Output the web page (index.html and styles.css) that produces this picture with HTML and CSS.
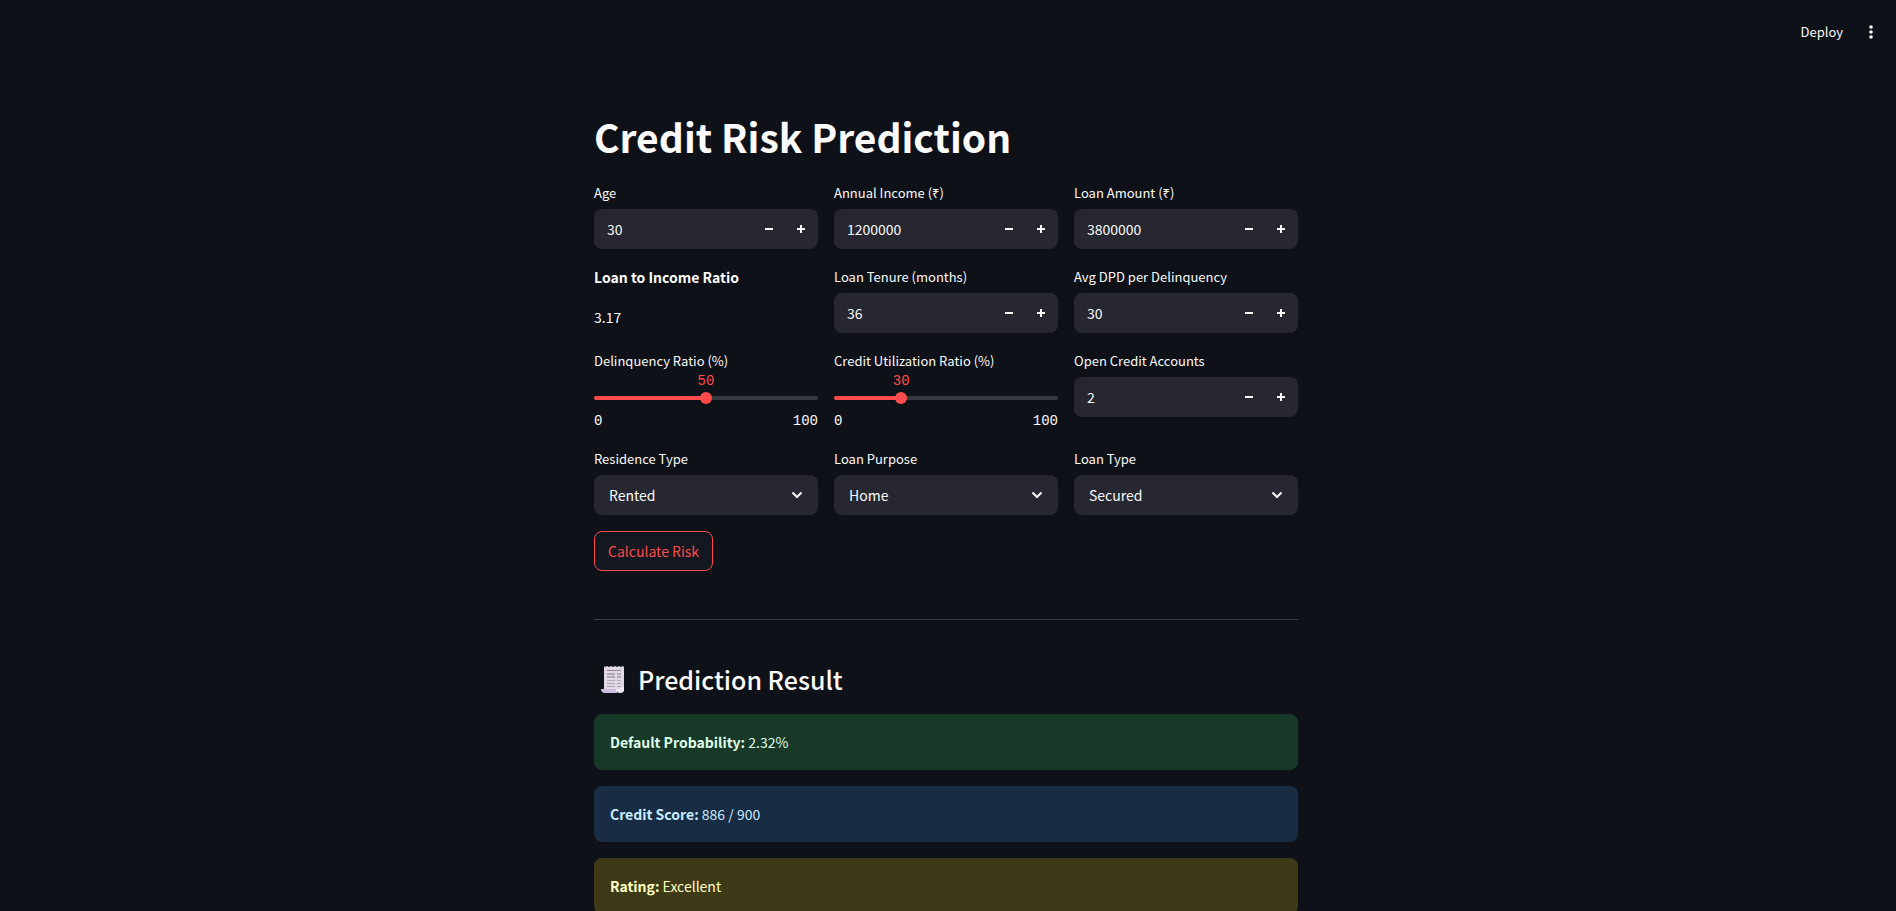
FILE: index.html
```html
<!DOCTYPE html>
<html lang="en">
<head>
<meta charset="utf-8">
<title>Credit Risk Prediction</title>
<link rel="stylesheet" href="styles.css">
</head>
<body>
<svg class="sprite" aria-hidden="true">
  <symbol id="minus" viewBox="0 0 8 8"><path d="M0 3h8v2H0z"/></symbol>
  <symbol id="plus" viewBox="0 0 8 8"><path d="M3 0h2v3h3v2H5v3H3V5H0V3h3z"/></symbol>
  <symbol id="chevron" viewBox="0 0 12 8"><path d="M1.500 1.500L6 6l4.500-4.500" fill="none" stroke="currentColor" stroke-width="2"/></symbol>
</svg>
<header class="toolbar">
  <button class="deploy" type="button">Deploy</button>
  <button class="menu" type="button" aria-label="Main menu"><svg viewBox="0 0 4 14"><circle cx="2" cy="2" r="1.800"/><circle cx="2" cy="7" r="1.800"/><circle cx="2" cy="12" r="1.800"/></svg></button>
</header>
<main class="page">
  <h1 class="title">Credit Risk Prediction</h1>
  <form class="form">
    <div class="row">
      <div class="field">
        <label class="label" for="age">Age</label>
        <div class="number"><input id="age" type="number" value="30"><button type="button" aria-label="Decrease"><svg><use href="#minus"/></svg></button><button type="button" aria-label="Increase"><svg><use href="#plus"/></svg></button></div>
      </div>
      <div class="field">
        <label class="label" for="income">Annual Income (₹)</label>
        <div class="number"><input id="income" type="number" value="1200000"><button type="button" aria-label="Decrease"><svg><use href="#minus"/></svg></button><button type="button" aria-label="Increase"><svg><use href="#plus"/></svg></button></div>
      </div>
      <div class="field">
        <label class="label" for="amount">Loan Amount (₹)</label>
        <div class="number"><input id="amount" type="number" value="3800000"><button type="button" aria-label="Decrease"><svg><use href="#minus"/></svg></button><button type="button" aria-label="Increase"><svg><use href="#plus"/></svg></button></div>
      </div>
    </div>
    <div class="row">
      <div class="ratio">
        <strong>Loan to Income Ratio</strong>
        <span>3.17</span>
      </div>
      <div class="field">
        <label class="label" for="tenure">Loan Tenure (months)</label>
        <div class="number"><input id="tenure" type="number" value="36"><button type="button" aria-label="Decrease"><svg><use href="#minus"/></svg></button><button type="button" aria-label="Increase"><svg><use href="#plus"/></svg></button></div>
      </div>
      <div class="field">
        <label class="label" for="dpd">Avg DPD per Delinquency</label>
        <div class="number"><input id="dpd" type="number" value="30"><button type="button" aria-label="Decrease"><svg><use href="#minus"/></svg></button><button type="button" aria-label="Increase"><svg><use href="#plus"/></svg></button></div>
      </div>
    </div>
    <div class="row">
      <div class="field" style="--value: 50%">
        <label class="label" for="delinquency">Delinquency Ratio (%)</label>
        <div class="slider"><span class="rail"></span><input id="delinquency" type="range" min="0" max="100" value="50"><output for="delinquency">50</output></div>
        <div class="bounds"><span>0</span><span>100</span></div>
      </div>
      <div class="field" style="--value: 30%">
        <label class="label" for="utilization">Credit Utilization Ratio (%)</label>
        <div class="slider"><span class="rail"></span><input id="utilization" type="range" min="0" max="100" value="30"><output for="utilization">30</output></div>
        <div class="bounds"><span>0</span><span>100</span></div>
      </div>
      <div class="field">
        <label class="label" for="accounts">Open Credit Accounts</label>
        <div class="number"><input id="accounts" type="number" value="2"><button type="button" aria-label="Decrease"><svg><use href="#minus"/></svg></button><button type="button" aria-label="Increase"><svg><use href="#plus"/></svg></button></div>
      </div>
    </div>
    <div class="row">
      <div class="field">
        <label class="label" for="residence">Residence Type</label>
        <div class="select"><select id="residence"><option>Rented</option><option>Owned</option></select><svg><use href="#chevron"/></svg></div>
      </div>
      <div class="field">
        <label class="label" for="purpose">Loan Purpose</label>
        <div class="select"><select id="purpose"><option>Home</option><option>Auto</option></select><svg><use href="#chevron"/></svg></div>
      </div>
      <div class="field">
        <label class="label" for="type">Loan Type</label>
        <div class="select"><select id="type"><option>Secured</option><option>Unsecured</option></select><svg><use href="#chevron"/></svg></div>
      </div>
    </div>
    <button class="submit" type="button">Calculate Risk</button>
  </form>
  <hr class="divider">
  <h2 class="subtitle">
    <svg class="receipt" viewBox="0 0 24 28" aria-hidden="true">
      <path d="M3 1l1 1 2-1 2 1 2-1 2 1 2-1 2 1 2-1 2 1 2-1 1 1v24H3z" fill="#e0d8e6"/>
      <path d="M6 5h14v1H6z" fill="#8f8a99"/>
      <path d="M6 8h8v2H6zM16 8h4v2h-4zM6 11h8v2H6zM16 11h4v2h-4zM6 15h8v1H6zM16 15h4v1h-4zM6 18h8v1H6zM16 18h4v1h-4zM6 21h8v1H6zM16 21h4v1h-4z" fill="#b0aab6"/>
      <path d="M0 24h16v4H3q-3-1-3-4z" fill="#cdbfdf"/>
      <path d="M15 24q5 0 8-2v3q0 3-4 3-4 0-4-4z" fill="#f0e9f5"/>
    </svg>
    Prediction Result
  </h2>
  <section class="results">
    <p class="alert success"><strong>Default Probability:</strong> 2.32%</p>
    <p class="alert info"><strong>Credit Score:</strong> 886 / 900</p>
    <p class="alert warning"><strong>Rating:</strong> Excellent</p>
  </section>
</main>
</body>
</html>
```
FILE: styles.css
```css
* { box-sizing: border-box; }
html { overflow: hidden; background: #0e1117; }
body {
  margin: 0;
  height: 100vh;
  overflow: hidden auto;
  scrollbar-width: none;
  color: #fafafa;
  font: 14px/24px "Noto Sans CJK SC", "Noto Sans", sans-serif;
}
button, input, select { font: inherit; color: inherit; background: none; border: 0; margin: 0; padding: 0; }
svg { fill: currentColor; display: block; }
.sprite { position: absolute; width: 0; height: 0; }
.toolbar {
  display: flex;
  justify-content: flex-end;
  align-items: center;
  gap: 18px;
  height: 64px;
  padding-right: 15px;
}
.deploy { font-size: 13px; }
.menu { display: grid; place-items: center; width: 20px; height: 24px; }
.menu svg { width: 4px; height: 14px; }
.page { max-width: 740px; margin: 0 auto; padding: 46px 20px 48px 16px; }
.title { margin: 0 0 18px; font-size: 39px; line-height: 53px; font-weight: 700; }
.form { display: flex; flex-direction: column; align-items: flex-start; gap: 16px; }
.row { display: grid; grid-template-columns: repeat(3, 1fr); gap: 16px; width: 100%; }
.field { min-width: 0; }
.label { display: block; height: 24px; margin-bottom: 4px; font-size: 13px; line-height: 24px; }
.number { display: flex; height: 40px; padding-right: 1px; border-radius: 8px; background: #262730; overflow: hidden; }
.number input { flex: 1; min-width: 0; padding-left: 13px; outline: 0; appearance: textfield; }
.number input::-webkit-inner-spin-button { appearance: none; margin: 0; }
.number button { display: grid; place-items: center; width: 32px; }
.number svg { width: 8px; height: 8px; }
.ratio { display: grid; align-content: start; gap: 16px; }
.slider { position: relative; display: grid; align-items: center; height: 34px; padding-top: 8px; }
.slider .rail {
  grid-area: 1 / 1;
  height: 4px;
  border-radius: 4px;
  background: linear-gradient(to right, #ff4b4b var(--value), #363942 var(--value));
}
.slider input { grid-area: 1 / 1; width: calc(100% + 12px); height: 12px; margin: 0 -6px; appearance: none; }
.slider input::-webkit-slider-thumb { appearance: none; width: 12px; height: 12px; border-radius: 50%; background: #ff4b4b; }
.slider output {
  position: absolute;
  top: -8px;
  left: var(--value);
  transform: translateX(-50%);
  color: #ff4b4b;
  font: 14px/24px "Liberation Mono", monospace;
}
.bounds { display: flex; justify-content: space-between; font: 14px/20px "Liberation Mono", monospace; }
.select { display: grid; align-items: center; height: 40px; border-radius: 8px; background: #262730; }
.select select { grid-area: 1 / 1; width: 100%; height: 40px; padding-left: 15px; appearance: none; }
.select svg { grid-area: 1 / 1; justify-self: end; width: 12px; height: 8px; margin-right: 15px; pointer-events: none; }
.submit {
  height: 40px;
  padding: 0 13px;
  border: 1px solid #ff4b4b;
  border-radius: 8px;
  background: #131720;
  color: #ff4b4b;
}
.divider { height: 1px; margin: 48px 0; border: 0; background: #3b3d42; }
.subtitle {
  display: flex;
  align-items: center;
  gap: 13px;
  margin: -8px 0 16px;
  padding-left: 7px;
  font-size: 25px;
  line-height: 38px;
  font-weight: 500;
}
.receipt { width: 24px; height: 28px; }
.results { display: grid; gap: 16px; }
.alert { margin: 0; padding: 16px; border-radius: 8px; }
.success { background: #183828; color: #dffde9; }
.info { background: #182c43; color: #c7ebff; }
.warning { background: #3e3916; color: #ffffc2; }
```
